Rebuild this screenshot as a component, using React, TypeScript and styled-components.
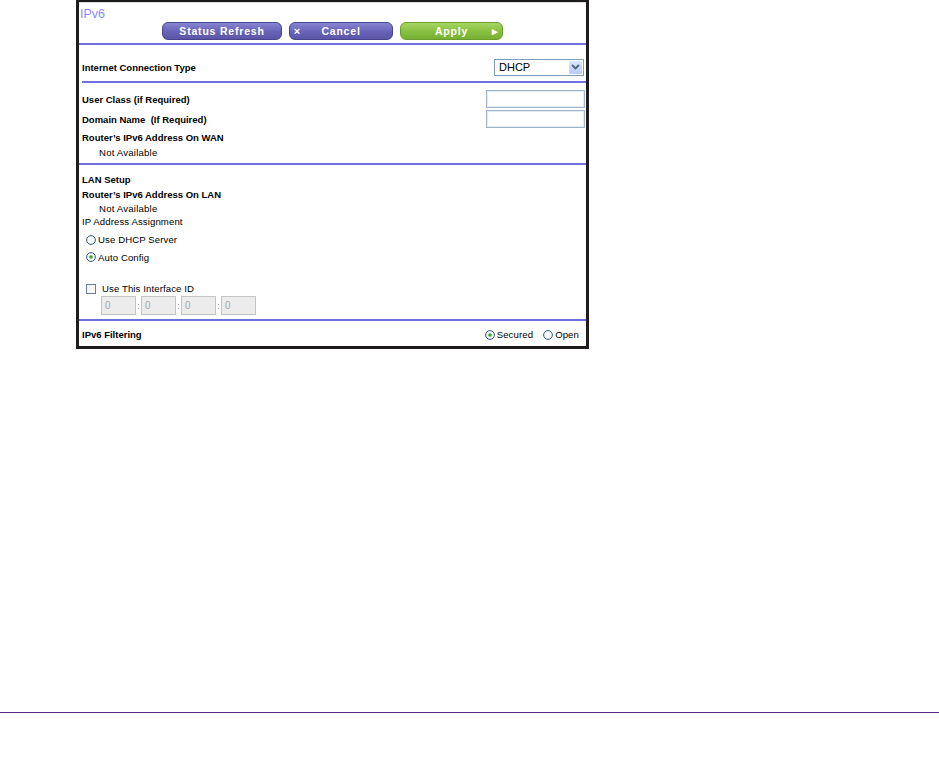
import React from 'react';
import styled, { createGlobalStyle } from 'styled-components';

const GlobalStyle = createGlobalStyle`
  html, body {
    margin: 0;
    padding: 0;
    background: #ffffff;
  }
  body {
    font-family: "Liberation Sans", Arial, sans-serif;
    color: #000000;
  }
`;

function RadioMark({ checked }: { checked?: boolean }) {
  return (
    <svg width="10" height="10" viewBox="0 0 10 10">
      <circle cx="5" cy="5" r="4.4" fill="#f6f6f2" stroke="#2e5b8c" strokeWidth="1" />
      {checked && <circle cx="5" cy="5" r="1.8" fill="#3aa53a" />}
    </svg>
  );
}

function SelectArrow() {
  return (
    <svg width="9" height="6" viewBox="0 0 9 6">
      <path d="M1 1 L4.5 4.5 L8 1" fill="none" stroke="#4d6185" strokeWidth="1.8" />
    </svg>
  );
}

function App() {
  return (
    <Page>
      <GlobalStyle />
      <Panel>
        <TitleRow>IPv6</TitleRow>
        <ButtonRow>
          <ActionButton $tone='purple' $w={120}>
            <span />
            <span>Status Refresh</span>
            <span />
          </ActionButton>
          <ActionButton $tone='purple' $w={104}>
            <ButtonIcon>×</ButtonIcon>
            <span>Cancel</span>
            <span />
          </ActionButton>
          <ActionButton $tone='green' $w={103}>
            <span />
            <span>Apply</span>
            <ButtonIcon>▸</ButtonIcon>
          </ActionButton>
        </ButtonRow>
        <Rule $mt={3} $inset={0} />

        <Row $mt={12} $h={20} $pr={2}>
          <Label>Internet Connection Type</Label>
          <FakeSelect>
            <span>DHCP</span>
            <SelectButton><SelectArrow /></SelectButton>
          </FakeSelect>
        </Row>
        <Rule $mt={4} $inset={3} />

        <Row $mt={6} $h={20} $pr={1}>
          <Label>User Class (if Required)</Label>
          <TextField />
        </Row>
        <Row $mt={0} $h={20} $pr={1}>
          <Label>Domain Name&nbsp; (If Required)</Label>
          <TextField />
        </Row>
        <Row $mt={0} $h={17}>
          <Label>Router’s IPv6 Address On WAN</Label>
        </Row>
        <Row $mt={0} $h={12}>
          <Note>Not Available</Note>
        </Row>
        <Rule $mt={5} $inset={0} />

        <Row $mt={7} $h={14}>
          <Label>LAN Setup</Label>
        </Row>
        <Row $mt={0} $h={16}>
          <Label>Router’s IPv6 Address On LAN</Label>
        </Row>
        <Row $mt={0} $h={12}>
          <Note>Not Available</Note>
        </Row>
        <Row $mt={0} $h={14}>
          <Plain>IP Address Assignment</Plain>
        </Row>
        <OptionRow $mt={3} $h={17}>
          <RadioMark />
          <Plain>Use DHCP Server</Plain>
        </OptionRow>
        <OptionRow $mt={0} $h={18}>
          <RadioMark checked />
          <Plain>Auto Config</Plain>
        </OptionRow>
        <OptionRow $mt={15} $h={15}>
          <CheckBox />
          <Plain>Use This Interface ID</Plain>
        </OptionRow>
        <InterfaceRow>
          <IdField>0</IdField>
          <IdSep>:</IdSep>
          <IdField>0</IdField>
          <IdSep>:</IdSep>
          <IdField>0</IdField>
          <IdSep>:</IdSep>
          <IdField>0</IdField>
        </InterfaceRow>
        <Rule $mt={4} $inset={0} />

        <Row $mt={4} $h={19} $pr={7}>
          <Label>IPv6 Filtering</Label>
          <FilterChoices>
            <RadioMark checked />
            <Plain>Secured</Plain>
            <Spacer />
            <RadioMark />
            <Plain>Open</Plain>
          </FilterChoices>
        </Row>
      </Panel>
      <FooterRule />
    </Page>
  );
}

const Page = styled.div`
  width: 939px;
  height: 782px;
  display: flex;
  flex-direction: column;
  overflow: hidden;
`

const Panel = styled.div`
  margin-left: 76px;
  width: 513px;
  height: 349px;
  box-sizing: border-box;
  border: 3px solid #1e1c1d;
  border-top-width: 2px;
  box-shadow: inset 0 1px 0 #dadada;
  display: flex;
  flex-direction: column;
  flex-shrink: 0;
`

const TitleRow = styled.div`
  padding: 5px 0 0 1px;
  height: 13px;
  line-height: 14px;
  font-size: 12.5px;
  color: #8c8cf6;
`

const ButtonRow = styled.div`
  margin-top: 2px;
  padding-left: 83px;
  display: flex;
  gap: 7px;
`

const ActionButton = styled.div<{ $tone: 'purple' | 'green'; $w: number }>`
  width: ${(p) => p.$w}px;
  height: 18px;
  box-sizing: border-box;
  border-radius: 6px;
  border: 1px solid ${(p) => (p.$tone === 'green' ? '#6a9c2c' : '#47438f')};
  background: ${(p) =>
    p.$tone === 'green'
      ? 'linear-gradient(#a6d662, #86bf40 55%, #78b034)'
      : 'linear-gradient(#8784d2, #6863b6 55%, #5a55a6)'};
  color: #ffffff;
  font-weight: bold;
  font-size: 10.5px;
  letter-spacing: 0.8px;
  white-space: nowrap;
  display: grid;
  grid-template-columns: 14px 1fr 14px;
  align-items: center;
  text-align: center;
  line-height: 16px;
`

const ButtonIcon = styled.span`
  font-size: 11px;
  letter-spacing: 0;
`

const Rule = styled.div<{ $mt: number; $inset: number }>`
  margin-top: ${(p) => p.$mt}px;
  margin-left: ${(p) => p.$inset}px;
  height: 2px;
  background: #6f6fe0;
  flex-shrink: 0;
`

const Row = styled.div<{ $mt: number; $h: number; $pr?: number }>`
  margin-top: ${(p) => p.$mt}px;
  height: ${(p) => p.$h}px;
  padding: 0 ${(p) => p.$pr ?? 0}px 0 3px;
  display: flex;
  align-items: center;
  justify-content: space-between;
  flex-shrink: 0;
`

const OptionRow = styled.div<{ $mt: number; $h: number }>`
  margin-top: ${(p) => p.$mt}px;
  height: ${(p) => p.$h}px;
  padding-left: 7px;
  display: flex;
  align-items: center;
  gap: 2px;
  flex-shrink: 0;
`

const Label = styled.span`
  font-weight: bold;
  font-size: 9.5px;
  white-space: pre;
`

const Plain = styled.span`
  font-size: 9.6px;
  letter-spacing: 0.1px;
`

const Note = styled.span`
  padding-left: 17px;
  font-size: 9.6px;
  letter-spacing: 0.2px;
`

const FakeSelect = styled.div`
  width: 90px;
  height: 17px;
  box-sizing: border-box;
  border: 1px solid #7f9db9;
  background: #ffffff;
  display: flex;
  align-items: center;
  justify-content: space-between;
  padding: 0 1px 0 4px;
  font-size: 11px;
`

const SelectButton = styled.div`
  width: 13px;
  height: 13px;
  background: linear-gradient(#dbe6fe, #b7cbf8);
  border-radius: 1px;
  display: flex;
  align-items: center;
  justify-content: center;
`

const TextField = styled.div`
  width: 99px;
  height: 18px;
  box-sizing: border-box;
  border: 1px solid #9fb4c9;
  box-shadow: inset 0 0 0 1px #e4ecf3;
  background: #ffffff;
`

const CheckBox = styled.div`
  width: 10px;
  height: 10px;
  box-sizing: border-box;
  border: 1px solid #6c7c93;
  background: linear-gradient(135deg, #ececea, #ffffff);
  margin-right: 4px;
`

const InterfaceRow = styled.div`
  margin-top: 0;
  height: 19px;
  padding-left: 22px;
  display: flex;
  align-items: center;
  flex-shrink: 0;
`

const IdField = styled.div`
  width: 35px;
  height: 19px;
  box-sizing: border-box;
  border: 1px solid #c4c4c4;
  background: #ececec;
  color: #a8a8a8;
  font-size: 10px;
  line-height: 17px;
  padding-left: 3px;
`

const IdSep = styled.span`
  width: 5px;
  text-align: center;
  font-size: 9px;
  color: #888888;
`

const FilterChoices = styled.div`
  display: flex;
  align-items: center;
  gap: 2px;
`

const Spacer = styled.span`
  width: 6px;
`

const FooterRule = styled.div`
  margin-top: 363px;
  height: 1px;
  background: #5b2b8f;
  flex-shrink: 0;
`

export default App;
